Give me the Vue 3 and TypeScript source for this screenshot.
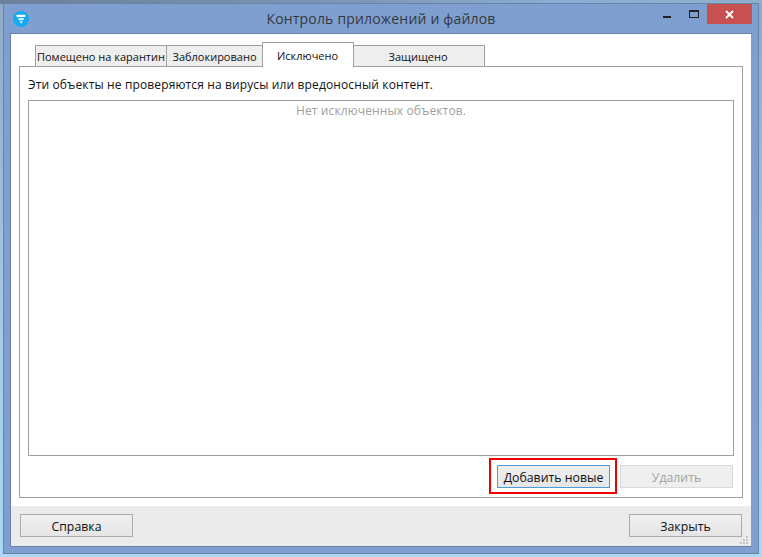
<script setup lang="ts">
const tabs = [
  { label: 'Помещено на карантин', cls: 't1' },
  { label: 'Заблокировано', cls: 't2' },
  { label: 'Исключено', cls: 't3 active' },
  { label: 'Защищено', cls: 't4' },
]
</script>

<template>
  <div class="desktop">
    <div class="window">
      <header class="titlebar">
        <svg class="logo" width="16" height="16" viewBox="0 0 16 16">
          <circle cx="8" cy="8" r="8" fill="#12aaf0" />
          <path d="M3.2 5 Q3.2 3.9 4.4 3.8 L11.8 3.8 Q12.9 3.9 12.5 5 L12 6 L4.2 6.2 Z" fill="#fff" />
          <path d="M5 7.5 L11.2 7.2 L10.4 9 L6 9.2 Z" fill="#fff" />
          <path d="M7 10.3 L9.7 10.2 L8.6 12.2 Q8 12.6 7.6 12 Z" fill="#fff" />
        </svg>
        <div class="title">Контроль приложений и файлов</div>
        <div class="controls">
          <span class="min"></span>
          <span class="max"></span>
          <span class="close">
            <svg width="9" height="9" viewBox="0 0 9 9"><path d="M1 1 L8 8 M8 1 L1 8" stroke="#fff" stroke-width="1.8" /></svg>
          </span>
        </div>
      </header>
      <div class="client">
        <main class="content">
          <div class="tabs">
            <div v-for="t in tabs" :key="t.label" class="tab" :class="t.cls">{{ t.label }}</div>
          </div>
          <section class="pane">
            <p class="desc">Эти объекты не проверяются на вирусы или вредоносный контент.</p>
            <div class="list">Нет исключенных объектов.</div>
            <div class="actions">
              <div class="highlight">
                <button class="btn focus">Добавить новые</button>
              </div>
              <button class="btn disabled">Удалить</button>
            </div>
          </section>
        </main>
        <footer class="footer">
          <button class="btn">Справка</button>
          <button class="btn">Закрыть</button>
          <svg class="grip" width="8" height="8" viewBox="0 0 8 8" fill="#c4c4c4">
            <rect x="6" y="0" width="2" height="2" />
            <rect x="3" y="3" width="2" height="2" /><rect x="6" y="3" width="2" height="2" />
            <rect x="0" y="6" width="2" height="2" /><rect x="3" y="6" width="2" height="2" /><rect x="6" y="6" width="2" height="2" />
          </svg>
        </footer>
      </div>
    </div>
  </div>
</template>

<style>
html, body { margin: 0; padding: 0; }
</style>

<style scoped>
.desktop {
  width: 762px;
  height: 557px;
  box-sizing: border-box;
  padding: 3px;
  overflow: hidden;
  background:
    linear-gradient(90deg, rgba(95, 115, 140, 0.75) 0%, rgba(110, 135, 165, 0.55) 45%, rgba(130, 185, 240, 0.35) 75%, rgba(150, 200, 225, 0.2) 100%) top / 100% 4px no-repeat,
    linear-gradient(180deg, #8fa9c6 0%, #a5cbe6 60%, #abd8f0 100%);
  font-family: "Open Sans", "Noto Sans", sans-serif;
  font-size: 12px;
  color: #111;
}
.window {
  height: 100%;
  box-sizing: border-box;
  border: 1px solid #6a82a8;
  background: #7f9fd0;
  padding: 0 6px 6px 6px;
  display: flex;
  flex-direction: column;
}
.titlebar {
  height: 29px;
  flex: none;
  display: flex;
  align-items: flex-start;
  position: relative;
}
.logo { margin: 6.5px 0 0 3px; }
.title {
  position: absolute;
  left: 0;
  right: 0;
  top: 5px;
  text-align: center;
  font-size: 14px;
  letter-spacing: 0.18px;
  line-height: 20px;
  color: #33383f;
}
.controls {
  margin-left: auto;
  display: flex;
  position: relative;
  align-items: flex-start;
}
.min { width: 8px; height: 2px; background: #222; margin: 12px 18px 0 0; }
.max {
  width: 10px;
  height: 8px;
  box-sizing: border-box;
  border: 1px solid #222;
  border-top-width: 2px;
  margin: 6px 8px 0 0;
}
.close {
  width: 45px;
  height: 20px;
  background: #c75050;
  display: flex;
  align-items: center;
  justify-content: center;
}
.client {
  flex: 1;
  background: #fff;
  border: 1px solid #6a82a8;
  border-right-color: #7f9fd0;
  display: flex;
  flex-direction: column;
  min-height: 0;
}
.content {
  flex: 1;
  padding: 8px 8px 0 8px;
  background: #fff;
}
.tabs {
  height: 24px;
  display: flex;
  padding-left: 16px;
  align-items: flex-start;
  position: relative;
  z-index: 1;
}
.tab {
  box-sizing: border-box;
  height: 21px;
  margin-top: 3px;
  border: 1px solid #a0a0a0;
  border-bottom: none;
  background: #eeeeee;
  text-align: center;
  font-size: 11px;
  line-height: 22px;
  white-space: nowrap;
}
.t1 { width: 132px; }
.t2 { width: 97px; margin-left: -1px; }
.t3 { width: 92px; margin-left: -1px; padding-right: 1px; }
.t4 { width: 132px; margin-left: -1px; padding-right: 2px; }
.tab.active {
  position: relative;
  height: 25px;
  margin-top: 0;
  background: #fff;
  line-height: 25px;
}
.pane {
  height: 432px;
  box-sizing: border-box;
  border: 1px solid #a0a0a0;
  padding: 0 8px;
  display: flex;
  flex-direction: column;
}
.desc {
  margin: 0;
  height: 33px;
  line-height: 35px;
  white-space: nowrap;
  font-size: 12px;
  letter-spacing: 0.13px;
}
.list {
  height: 356px;
  flex: none;
  box-sizing: border-box;
  border: 1px solid #a0a0a0;
  text-align: center;
  color: #a0a0a0;
  line-height: 19px;
  font-size: 12px;
  letter-spacing: 0.12px;
}
.actions {
  display: flex;
  justify-content: flex-end;
  align-items: flex-start;
  margin-top: 2px;
  padding-right: 1px;
  gap: 3px;
}
.highlight {
  box-sizing: border-box;
  width: 128px;
  height: 36px;
  border: 2px solid #ee0000;
  padding: 5px 5px 4px 6px;
}
.btn {
  display: block;
  box-sizing: border-box;
  width: 113px;
  height: 23px;
  padding: 2px 0 0;
  border: 1px solid #ababab;
  background: linear-gradient(180deg, #f0f0f0, #e5e5e5);
  font: inherit;
  font-size: 12.3px;
  color: #111;
}
.btn.focus { border-color: #4a9be0; }
.btn.disabled {
  margin-top: 7px;
  background: #efefef;
  border-color: #d9d9d9;
  color: #a3a3a3;
}
.footer {
  height: 40px;
  flex: none;
  margin-top: 8px;
  box-sizing: border-box;
  background: #ebebeb;
  padding: 8px 9px;
  display: flex;
  justify-content: space-between;
  align-items: flex-start;
  position: relative;
}
.grip { position: absolute; right: 3px; bottom: 2px; }
</style>
